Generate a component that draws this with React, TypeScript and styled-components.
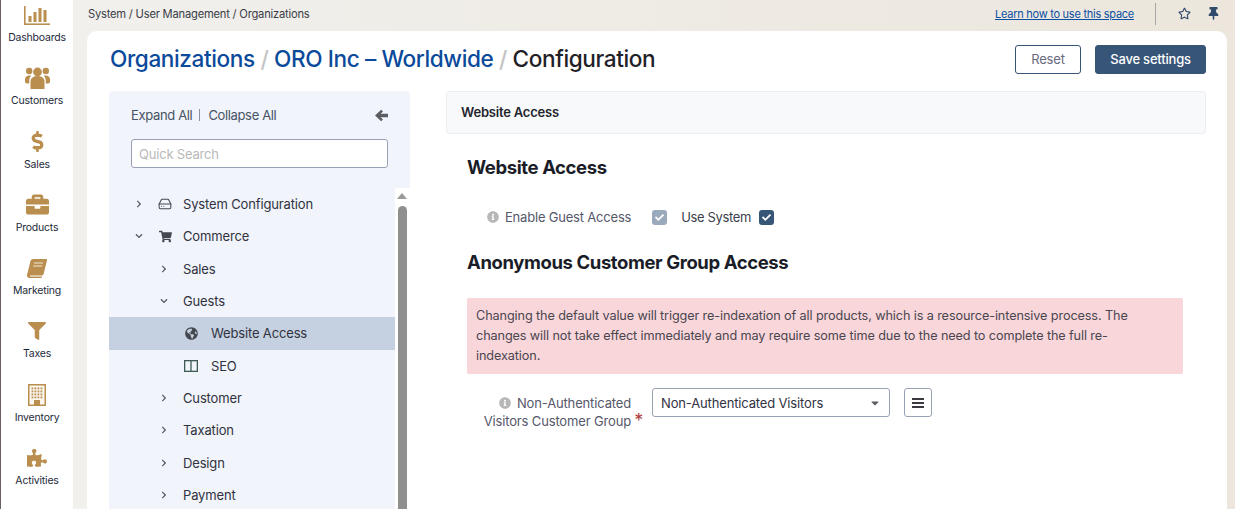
import React from "react";
import styled, { createGlobalStyle } from "styled-components";
import {
  FaBriefcase,
  FaCaretDown,
  FaCheck,
  FaChevronDown,
  FaChevronRight,
  FaDollarSign,
  FaFilter,
  FaGlobeAmericas,
  FaInfoCircle,
  FaPuzzlePiece,
  FaRegStar,
  FaShoppingCart,
  FaThumbtack,
} from "react-icons/fa";
import { HardDrive } from "lucide-react";

const GlobalStyle = createGlobalStyle`
  html, body {
    margin: 0;
    padding: 0;
    height: 509px;
    overflow: hidden;
    background: #ede8df;
    font-family: "Inter", "Liberation Sans", sans-serif;
    color: #30323a;
  }
  * { box-sizing: border-box; }
`;

const Shell = styled.div`
  display: grid;
  grid-template-columns: 73px 1fr;
  height: 509px;
  overflow: hidden;
`;

const Nav = styled.nav`
  background: #fff;
  border-left: 1px solid #6b5f66;
  height: 509px;
  overflow: hidden;
`;

const NavList = styled.div`
  margin-top: -14px;
  display: flex;
  flex-direction: column;
`;

const NavItem = styled.div`
  height: 63.3px;
  padding-top: 13px;
  display: flex;
  flex-direction: column;
  align-items: center;
  font-size: 10.5px;
  line-height: 14px;
  letter-spacing: -0.2px;
  color: #23293a;
`;

const NavIcon = styled.div<{ $size: number }>`
  height: 32px;
  display: flex;
  align-items: center;
  justify-content: center;
  color: #b98e4f;
  font-size: ${(p) => p.$size}px;
`;

const Main = styled.div`
  display: flex;
  flex-direction: column;
  min-width: 0;
  background: linear-gradient(90deg, #f1f0ed 0%, #ece6dc 100%);
`;

const TopBar = styled.header`
  height: 31px;
  display: flex;
  align-items: center;
  padding: 0 15px 4px 15px;
  font-size: 11.2px;
  letter-spacing: -0.22px;
  color: #3a3d47;
`;

const Crumbs = styled.div`
  flex: 1;
`;

const HelpLink = styled.a`
  font-size: 11px;
  letter-spacing: -0.26px;
  color: #0b4fa3;
  text-decoration: underline;
  margin-right: 21px;
`;

const TopDivider = styled.span`
  width: 1px;
  height: 22px;
  background: #a6a6a6;
  margin-right: 22px;
`;

const TopIcon = styled.span<{ $gap?: number }>`
  display: inline-flex;
  font-size: 13px;
  color: #2f4a6b;
  margin-right: ${(p) => p.$gap ?? 0}px;
`;

const Card = styled.main`
  flex: 1;
  margin: 0 8px 0 14px;
  background: #fff;
  border-radius: 10px 10px 0 0;
  padding: 14px 21px 0 22px;
  overflow: hidden;
`;

const TitleRow = styled.div`
  display: flex;
  align-items: center;
  justify-content: space-between;
  height: 29px;
  margin-bottom: 17px;
`;

const Title = styled.h1`
  margin: 0 0 2px 1px;
  font-size: 22.6px;
  font-weight: 500;
  letter-spacing: -0.4px;
  white-space: nowrap;
  color: #1f2128;
`;

const TitleLink = styled.span`
  color: #0b4a9a;
`;

const TitleSep = styled.span`
  color: #c4c4c4;
`;

const Actions = styled.div`
  display: flex;
  gap: 14px;
`;

const Button = styled.button<{ $primary?: boolean }>`
  height: 29px;
  padding: 0 0 2px;
  width: ${(p) => (p.$primary ? 111 : 66)}px;
  border-radius: 3px;
  font: inherit;
  font-size: 13px;
  letter-spacing: -0.2px;
  font-weight: ${(p) => (p.$primary ? 500 : 400)};
  background: ${(p) => (p.$primary ? "#375577" : "#fff")};
  border: 1px solid #375577;
  color: ${(p) => (p.$primary ? "#fff" : "#6a6a80")};
`;

const Columns = styled.div`
  display: grid;
  grid-template-columns: 301px 1fr;
  column-gap: 36px;
`;

const Side = styled.aside`
  height: 430px;
  display: flex;
  flex-direction: column;
`;

const SideHead = styled.div`
  height: 97px;
  background: #f1f4fa;
  border-radius: 3px 3px 0 0;
  padding: 15px 22px 0 22px;
`;

const ExpandRow = styled.div`
  display: flex;
  align-items: center;
  height: 18px;
  font-size: 13px;
  letter-spacing: -0.35px;
  color: #475366;
  margin-bottom: 15px;
`;

const ExpandSep = styled.span`
  width: 1px;
  height: 12px;
  background: #8a94a6;
  margin: 0 8px 0 7px;
`;

const BackArrow = styled.svg`
  margin-left: auto;
  width: 13px;
  height: 13px;
  fill: #5c5c64;
`;

const Search = styled.input`
  width: 100%;
  height: 29px;
  padding: 0 7px;
  border: 1px solid #9aa0b5;
  border-radius: 3px;
  background: #fff;
  font: inherit;
  font-size: 13px;
  letter-spacing: -0.2px;
  &::placeholder {
    color: #b9b9b9;
  }
`;

const TreeWrap = styled.div`
  display: grid;
  grid-template-columns: 286px 15px;
  flex: 1;
  min-height: 0;
`;

const Tree = styled.div`
  background: #f1f4fa;
`;

const Row = styled.div<{ $indent: number; $active?: boolean }>`
  height: 32.33px;
  display: flex;
  align-items: center;
  padding-left: ${(p) => p.$indent}px;
  font-size: 13px;
  letter-spacing: -0.15px;
  color: #30323f;
  background: ${(p) => (p.$active ? "#c5d1e0" : "transparent")};
`;

const Toggle = styled.span`
  width: 14px;
  display: inline-flex;
  justify-content: center;
  font-size: 8px;
  color: #55585f;
  margin-right: 12px;
`;

const RowIcon = styled.span<{ $gap: number }>`
  width: 14px;
  display: inline-flex;
  justify-content: center;
  font-size: 13px;
  color: #45474f;
  margin-right: ${(p) => p.$gap}px;
`;

const Scrollbar = styled.div`
  background: #fff;
  display: flex;
  flex-direction: column;
  align-items: center;
  padding: 5px 3px 0 2px;
`;

const ScrollArrow = styled.span`
  width: 0;
  height: 0;
  border-left: 5px solid transparent;
  border-right: 5px solid transparent;
  border-bottom: 6px solid #9a9a9a;
  margin-bottom: 7px;
`;

const ScrollThumb = styled.div`
  width: 9px;
  flex: 1;
  background: #8f8f8f;
  border-radius: 5px 5px 0 0;
`;

const Content = styled.section`
  min-width: 0;
`;

const SectionBar = styled.div`
  height: 43px;
  display: flex;
  align-items: center;
  padding: 0 0 2px 14px;
  background: #f8f9fb;
  border: 1px solid #eceef2;
  border-radius: 3px;
  font-size: 13px;
  font-weight: 600;
  letter-spacing: -0.2px;
  color: #23252d;
  margin-bottom: 21px;
`;

const Heading = styled.h2`
  margin: 0 0 0 21px;
  font-size: 18.5px;
  line-height: 24px;
  font-weight: 700;
  letter-spacing: -0.4px;
  color: #1a1d28;
`;

const FieldRow = styled.div`
  display: flex;
  align-items: center;
  height: 20px;
  margin: 28px 0 23px 41px;
  font-size: 13px;
  letter-spacing: -0.2px;
  color: #55586a;
`;

const InfoIcon = styled.span`
  display: inline-flex;
  font-size: 12px;
  color: #b7b7b7;
  margin-right: 6px;
  vertical-align: -1px;
`;

const Check = styled.span<{ $dim?: boolean; $gap?: number }>`
  width: 15px;
  height: 15px;
  border-radius: 3px;
  display: inline-flex;
  align-items: center;
  justify-content: center;
  font-size: 9px;
  color: #fff;
  margin-left: ${(p) => p.$gap ?? 0}px;
  background: ${(p) => (p.$dim ? "#9ba9bd" : "#375577")};
`;

const UseSystem = styled.span`
  margin: 0 8px 0 14px;
  letter-spacing: -0.35px;
  color: #3c3f4c;
`;

const Alert = styled.div`
  margin: 24px 23px 0 21px;
  padding: 8px 14px 8px 9px;
  background: #f9d6da;
  border-radius: 2px;
  font-size: 12.7px;
  line-height: 20px;
  letter-spacing: -0.12px;
  color: #4a4650;
`;

const SelectRow = styled.div`
  display: flex;
  align-items: flex-start;
  margin: 14px 0 0 21px;
`;

const SelectLabel = styled.label`
  position: relative;
  width: 176px;
  padding-right: 12px;
  margin-top: 6px;
  text-align: right;
  font-size: 13px;
  line-height: 18px;
  letter-spacing: -0.15px;
  color: #55586a;
`;

const Required = styled.span`
  position: absolute;
  right: 0;
  bottom: 0;
  color: #b3403f;
  font-size: 18px;
`;

const SelectBox = styled.div`
  width: 238px;
  height: 29px;
  margin-left: 9px;
  padding: 0 8px;
  display: flex;
  align-items: center;
  justify-content: space-between;
  border: 1px solid #9aa0b5;
  border-radius: 3px;
  font-size: 13px;
  letter-spacing: -0.15px;
  color: #30323f;
`;

const Caret = styled.span`
  display: inline-flex;
  font-size: 12px;
  color: #5c5c64;
`;

const SquareBtn = styled.button`
  width: 28px;
  height: 29px;
  margin-left: 14px;
  padding: 0;
  display: inline-flex;
  align-items: center;
  justify-content: center;
  border: 1px solid #9aa0b5;
  border-radius: 3px;
  background: #fff;
  color: #3a3a40;
`;

const ChartIcon = () => (
  <svg width="26" height="19" viewBox="0 0 26 19" fill="currentColor">
    <rect x="0" y="0" width="1.6" height="19" />
    <rect x="0" y="17.4" width="26" height="1.6" />
    <rect x="4.5" y="10" width="3" height="6" />
    <rect x="9.5" y="6" width="3" height="10" />
    <rect x="14.5" y="2" width="3" height="14" />
    <rect x="19.5" y="4" width="3" height="12" />
  </svg>
);

const UsersIcon = () => (
  <svg width="25" height="22" viewBox="0 0 25 22" fill="currentColor">
    <circle cx="12.5" cy="5" r="4.4" />
    <circle cx="4.2" cy="4" r="3.2" />
    <circle cx="20.8" cy="4" r="3.2" />
    <path d="M5.5 22 V14 a7 5 0 0 1 14 0 V22 Z" />
    <path d="M0 13 a4.2 4 0 0 1 4.2 -4.5 h2 a8 8 0 0 0 -2 5.5 v2.5 H2 a2 2 0 0 1 -2 -2 Z" />
    <path d="M25 13 a4.2 4 0 0 0 -4.2 -4.5 h-2 a8 8 0 0 1 2 5.5 v2.5 H23 a2 2 0 0 0 2 -2 Z" />
  </svg>
);

const BookIcon = () => (
  <svg width="20" height="19" viewBox="0 0 20 19">
    <path fill="currentColor" d="M6 0 H19 a1 1 0 0 1 1 1.2 L16.6 15 a2 2 0 0 1 -2 1.5 H3 a1.2 1.2 0 0 0 0 1 H15 L14.6 19 H2.5 A2.5 2.5 0 0 1 0 16 L3.6 1.8 A2.5 2.5 0 0 1 6 0 Z" />
    <path stroke="#f3e9d8" strokeWidth="1.2" d="M7 4 H16 M6.2 7 H15.2" />
  </svg>
);

const BuildingIcon = () => (
  <svg width="18" height="22" viewBox="0 0 18 22">
    <rect x="0.75" y="0.75" width="16.5" height="20.5" fill="#fbf6ee" stroke="currentColor" strokeWidth="1.5" />
    <g fill="currentColor">
      {[3.5, 6.5, 9.5, 12.5].map((x) =>
        [3.5, 6.5, 9.5, 12.5].map((y) => <rect key={`${x}-${y}`} x={x} y={y} width="1.8" height="1.8" />)
      )}
      <rect x="6" y="16" width="6" height="5.5" />
    </g>
  </svg>
);

const SplitIcon = () => (
  <svg width="14" height="12" viewBox="0 0 14 12" fill="none" stroke="#3f5a55" strokeWidth="1.3">
    <rect x="0.65" y="0.65" width="12.7" height="10.7" />
    <path d="M7 1 V11" />
  </svg>
);

const BarsIcon = () => (
  <svg width="12" height="10" viewBox="0 0 12 10" fill="currentColor">
    <rect y="0" width="12" height="2" />
    <rect y="4" width="12" height="2" />
    <rect y="8" width="12" height="2" />
  </svg>
);

const navItems = [
  { label: "Dashboards", icon: <ChartIcon />, size: 24 },
  { label: "Customers", icon: <UsersIcon />, size: 24 },
  { label: "Sales", icon: <FaDollarSign />, size: 21 },
  { label: "Products", icon: <FaBriefcase />, size: 23 },
  { label: "Marketing", icon: <BookIcon />, size: 20 },
  { label: "Taxes", icon: <FaFilter />, size: 18 },
  { label: "Inventory", icon: <BuildingIcon />, size: 22 },
  { label: "Activities", icon: <FaPuzzlePiece />, size: 20 },
];

type TreeRow = {
  label: string;
  indent: number;
  toggle?: "open" | "closed";
  icon?: React.ReactNode;
  active?: boolean;
};

const treeRows: TreeRow[] = [
  { label: "System Configuration", indent: 23, toggle: "closed", icon: <HardDrive size={14} strokeWidth={1.8} /> },
  { label: "Commerce", indent: 23, toggle: "open", icon: <FaShoppingCart /> },
  { label: "Sales", indent: 48, toggle: "closed" },
  { label: "Guests", indent: 48, toggle: "open" },
  { label: "Website Access", indent: 75, icon: <FaGlobeAmericas />, active: true },
  { label: "SEO", indent: 75, icon: <SplitIcon /> },
  { label: "Customer", indent: 48, toggle: "closed" },
  { label: "Taxation", indent: 48, toggle: "closed" },
  { label: "Design", indent: 48, toggle: "closed" },
  { label: "Payment", indent: 48, toggle: "closed" },
];

export default function App() {
  return (
    <>
      <GlobalStyle />
      <Shell>
        <Nav>
          <NavList>
            {navItems.map((item) => (
              <NavItem key={item.label}>
                <NavIcon $size={item.size}>{item.icon}</NavIcon>
                {item.label}
              </NavItem>
            ))}
          </NavList>
        </Nav>
        <Main>
          <TopBar>
            <Crumbs>System / User Management / Organizations</Crumbs>
            <HelpLink>Learn how to use this space</HelpLink>
            <TopDivider />
            <TopIcon $gap={16}><FaRegStar /></TopIcon>
            <TopIcon><FaThumbtack /></TopIcon>
          </TopBar>
          <Card>
            <TitleRow>
              <Title>
                <TitleLink>Organizations</TitleLink> <TitleSep>/</TitleSep>{" "}
                <TitleLink>ORO Inc – Worldwide</TitleLink> <TitleSep>/</TitleSep> Configuration
              </Title>
              <Actions>
                <Button>Reset</Button>
                <Button $primary>Save settings</Button>
              </Actions>
            </TitleRow>
            <Columns>
              <Side>
                <SideHead>
                  <ExpandRow>
                    Expand All
                    <ExpandSep />
                    Collapse All
                    <BackArrow viewBox="0 0 14 14">
                      <path d="M0 7 L6.6 0.8 L8.6 2.8 L6 5.2 H14 V8.8 H6 L8.6 11.2 L6.6 13.2 Z" />
                    </BackArrow>
                  </ExpandRow>
                  <Search placeholder="Quick Search" readOnly />
                </SideHead>
                <TreeWrap>
                  <Tree>
                    {treeRows.map((row) => (
                      <Row key={row.label + row.indent} $indent={row.indent} $active={row.active}>
                        {row.toggle && (
                          <Toggle>
                            {row.toggle === "open" ? <FaChevronDown /> : <FaChevronRight />}
                          </Toggle>
                        )}
                        {row.icon && <RowIcon $gap={row.toggle ? 11 : 13}>{row.icon}</RowIcon>}
                        {row.label}
                      </Row>
                    ))}
                  </Tree>
                  <Scrollbar>
                    <ScrollArrow />
                    <ScrollThumb />
                  </Scrollbar>
                </TreeWrap>
              </Side>
              <Content>
                <SectionBar>Website Access</SectionBar>
                <Heading>Website Access</Heading>
                <FieldRow>
                  <InfoIcon><FaInfoCircle /></InfoIcon>
                  Enable Guest Access
                  <Check $dim $gap={21}><FaCheck /></Check>
                  <UseSystem>Use System</UseSystem>
                  <Check><FaCheck /></Check>
                </FieldRow>
                <Heading>Anonymous Customer Group Access</Heading>
                <Alert>
                  Changing the default value will trigger re-indexation of all products, which is a resource-intensive
                  process. The changes will not take effect immediately and may require some time due to the need to
                  complete the full re-indexation.
                </Alert>
                <SelectRow>
                  <SelectLabel>
                    <InfoIcon><FaInfoCircle /></InfoIcon>
                    Non-Authenticated Visitors Customer Group
                    <Required>*</Required>
                  </SelectLabel>
                  <SelectBox>
                    Non-Authenticated Visitors
                    <Caret><FaCaretDown /></Caret>
                  </SelectBox>
                  <SquareBtn><BarsIcon /></SquareBtn>
                </SelectRow>
              </Content>
            </Columns>
          </Card>
        </Main>
      </Shell>
    </>
  );
}
